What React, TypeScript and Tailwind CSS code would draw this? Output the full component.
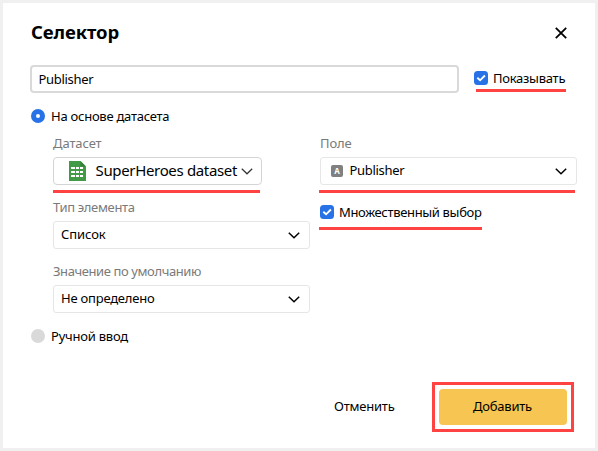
import type { ReactNode } from 'react';

function Chevron({ thin = false }: { thin?: boolean }) {
  return (
    <svg className="h-[7px] w-3 shrink-0" viewBox="0 0 12 7" fill="none" stroke={thin ? '#333' : '#000'} strokeWidth={thin ? 1.2 : 1.5}>
      <path d="M0.8 0.8 6 5.8 11.2 0.8" />
    </svg>
  );
}

function Check() {
  return (
    <span className="flex size-3.5 shrink-0 items-center justify-center rounded-[3.5px] bg-[#2672e6]">
      <svg className="size-3.5" viewBox="0 0 14 14" fill="none" stroke="#fff" strokeWidth="1.9">
        <path d="M3.3 6.7 6.1 9.3 10.9 4.5" />
      </svg>
    </span>
  );
}

function Select({ children }: { children: ReactNode }) {
  return (
    <div className="flex h-7 w-[257px] items-center justify-between rounded-[3px] border border-[#e6e6e6] pr-[9px] pl-[7px]">
      <div className="pb-0.5">{children}</div>
      <Chevron />
    </div>
  );
}

function Label({ children, className }: { children: ReactNode; className: string }) {
  return <div className={`h-5 text-[#7a7a7a] ${className}`}>{children}</div>;
}

export default function App() {
  return (
    <div className="h-[451px] w-[598px] border-[3px] border-[#f0f0f0] bg-white pt-[17px] pl-[27px] font-['Noto_Sans','Liberation_Sans',sans-serif] text-[13px] leading-5 whitespace-nowrap text-black">
      <header className="flex h-[25px] w-[537px] items-center justify-between">
        <h1 className="pb-0.5 pl-px text-[18.5px] leading-[25px] font-bold tracking-[-0.1px]">Селектор</h1>
        <svg className="size-3" viewBox="0 0 12 12" stroke="#000" strokeWidth="1.8">
          <path d="M0.8 0.8 11.2 11.2M11.2 0.8 0.8 11.2" />
        </svg>
      </header>

      <div className="mt-5 flex">
        <div className="flex h-7 w-[429px] items-center rounded-[4px] border-2 border-[#d9d9d9] pl-[6.5px]">
          <span className="tracking-[-0.3px]">Publisher</span>
        </div>
        <div className="ml-[15px] h-[27px] w-[92px]">
          <label className="flex h-6 items-center pt-0.5">
            <Check />
            <span className="ml-[5px] tracking-[-0.27px]">Показывать</span>
          </label>
          <div className="ml-0.5 h-[3px] w-[90px] bg-[#ff4343]" />
        </div>
      </div>

      <div className="mt-4 ml-px flex h-3.5 items-center">
        <span className="flex size-3.5 items-center justify-center rounded-full bg-[#2672e6]">
          <span className="size-1 rounded-full bg-white" />
        </span>
        <span className="ml-1.5 tracking-[-0.25px]">На основе датасета</span>
      </div>

      <div className="mt-2.5 ml-[23px] flex">
        <section className="w-[267px]">
          <Label className="tracking-[-0.1px]">Датасет</Label>
          <div className="mt-1 flex h-7 w-[209px] items-center rounded-[4px] border border-[#d4d4d4] pl-[15px]">
            <svg className="h-5 w-[17px] shrink-0" viewBox="0 0 17 20">
              <path fill="#439a46" d="M0 0h11.5L17 5.5V20H0z" />
              <path fill="#38803b" d="M11.5 0 17 5.5h-5.5z" />
              <path fill="#fff" d="M2 6h4v2H2zm5 0h3v2H7zm4 0h3v2h-3zM2 10h4v2H2zm5 0h3v2H7zm4 0h3v2h-3zM2 14h4v2H2zm5 0h3v2H7zm4 0h3v2h-3z" />
            </svg>
            <span className="ml-[9.5px] w-[145.5px] pb-0.5 text-[15px] leading-5 tracking-[-0.34px]">SuperHeroes dataset</span>
            <Chevron thin />
          </div>
          <div className="mt-[5px] h-[3px] w-[207px] bg-[#ff4343]" />
          <Label className="mt-1 tracking-[-0.35px]">Тип элемента</Label>
          <div className="mt-1">
            <Select><span className="tracking-[-0.1px]">Список</span></Select>
          </div>
          <Label className="mt-3 tracking-[-0.4px]">Значение по умолчанию</Label>
          <div className="mt-1">
            <Select><span className="tracking-[-0.22px]">Не определено</span></Select>
          </div>
        </section>

        <section>
          <Label className="tracking-[-0.1px]">Поле</Label>
          <div className="mt-1">
            <Select>
              <span className="flex items-center pl-[3px]">
                <span className="mt-0.5 flex size-3 items-center justify-center rounded-[2px] bg-[#808080] text-[8px] font-bold text-white">A</span>
                <span className="ml-[6.5px] tracking-[-0.3px]">Publisher</span>
              </span>
            </Select>
          </div>
          <div className="mt-[5px] -ml-px h-[3px] w-64 bg-[#ff4343]" />
          <label className="mt-3 flex h-3.5 items-center">
            <Check />
            <span className="ml-[5px] tracking-[-0.33px]">Множественный выбор</span>
          </label>
          <div className="mt-2 -ml-px h-[3px] w-[163px] bg-[#ff4343]" />
        </section>
      </div>

      <div className="mt-4 ml-px flex h-3.5 items-center">
        <span className="size-3.5 rounded-full bg-[#d9d9d9]" />
        <span className="ml-1.5 tracking-[-0.22px]">Ручной ввод</span>
      </div>

      <footer className="mt-[39px] flex items-center">
        <button className="ml-[304px] w-[62px] pb-0.5 text-left tracking-[-0.22px]">Отменить</button>
        <div className="ml-9 border-[3px] border-[#ff4343] p-1">
          <button className="h-9 w-32 rounded-[4px] bg-[#f7c551] pr-px pb-0.5 tracking-[-0.22px]">Добавить</button>
        </div>
      </footer>
    </div>
  );
}
